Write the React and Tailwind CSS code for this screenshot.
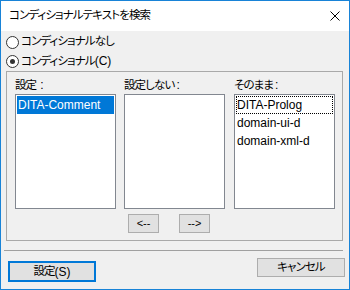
import React from "react";

const FONT = "[font-family:'Liberation_Sans','Noto_Sans_CJK_JP',sans-serif] [font-feature-settings:'palt']";
const JP = "text-[11.5px] tracking-[-0.9px]";

function Radio({ checked }) {
  return (
    <span className="w-[13px] h-[13px] rounded-full border border-[#333333] bg-white flex items-center justify-center shrink-0">
      {checked && <span className="w-[5px] h-[5px] rounded-full bg-[#333333]" />}
    </span>
  );
}

function ListColumn({ label, colon, items, selected, focused, className }) {
  return (
    <div className={"w-[101px] flex flex-col " + (className || "")}>
      <div className={"h-[22px] pt-[5px] leading-[16px] text-black whitespace-nowrap " + JP}>
        {label}
        <span className={"tracking-normal text-[12px] " + colon}>:</span>
      </div>
      <div className="h-[115px] border border-[#828790] bg-white p-[1px]">
        {items.map((it) => (
          <div
            key={it}
            className={
              "h-[18px] leading-[18px] pl-[1px] text-[12px] whitespace-nowrap " +
              (it === selected
                ? "bg-[#0078d7] text-white"
                : it === focused
                ? "text-black outline outline-1 outline-dotted outline-black -outline-offset-1"
                : "text-black")
            }
          >
            {it}
          </div>
        ))}
      </div>
    </div>
  );
}

export default function App() {
  return (
    <div
      className={
        "w-[350px] h-[290px] border border-[#1883d7] bg-[#f0f0f0] flex flex-col overflow-hidden text-black " +
        FONT
      }
    >
      <div className="h-[30px] bg-white flex items-center justify-between pl-[8px] pr-[9px] shrink-0">
        <span className={JP}>コンディショナルテキストを検索</span>
        <svg width="10" height="10" viewBox="0 0 10 10">
          <path d="M0.5 0.5 L9.5 9.5 M9.5 0.5 L0.5 9.5" stroke="#000" strokeWidth="1" />
        </svg>
      </div>

      <div className="flex flex-col pt-[1px]">
        <div className="h-[20px] flex items-center pl-[5px]">
          <Radio />
          <span className={"ml-[2px] " + JP}>コンディショナルなし</span>
        </div>
        <div className="h-[19px] flex items-center pl-[5px]">
          <Radio checked />
          <span className={"ml-[2px] " + JP}>
            コンディショナル<span className="tracking-normal text-[12px]">(C)</span>
          </span>
        </div>

        <div className="ml-[5px] w-[337px] h-[170px] border border-[#a9a9a9] pl-[8px] flex flex-col">
          <div className="flex">
            <ListColumn
              label="設定"
              colon="ml-[4px]"
              items={["DITA-Comment"]}
              selected="DITA-Comment"
            />
            <ListColumn label="設定しない" colon="ml-[2px]" items={[]} className="ml-[8px]" />
            <ListColumn
              label="そのまま"
              colon="ml-[2px]"
              items={["DITA-Prolog", "domain-ui-d", "domain-xml-d"]}
              focused="DITA-Prolog"
              className="ml-[9px]"
            />
          </div>
          <div className="flex mt-[5px] ml-[113px]">
            <button className="w-[31px] h-[19px] border border-[#adadad] bg-[#e1e1e1] text-[11px] leading-none flex items-center justify-center">
              &lt;--
            </button>
            <button className="ml-[20px] w-[31px] h-[19px] border border-[#adadad] bg-[#e1e1e1] text-[11px] leading-none flex items-center justify-center">
              --&gt;
            </button>
          </div>
        </div>

        <div className="mt-[9px] ml-[3px] w-[339px] h-px bg-[#a0a0a0]" />

        <div className="flex items-start">
          <button className={"ml-[7px] mt-[10px] w-[88px] h-[21px] border-2 border-[#0078d7] bg-[#e1e1e1] leading-none flex items-center justify-center " + JP}>
            設定<span className="tracking-normal text-[12px]">(S)</span>
          </button>
          <button className={"ml-auto mr-[4px] mt-[7px] w-[88px] h-[19px] border border-[#adadad] bg-[#e1e1e1] leading-none flex items-center justify-center " + JP}>
            キャンセル
          </button>
        </div>
      </div>
    </div>
  );
}
